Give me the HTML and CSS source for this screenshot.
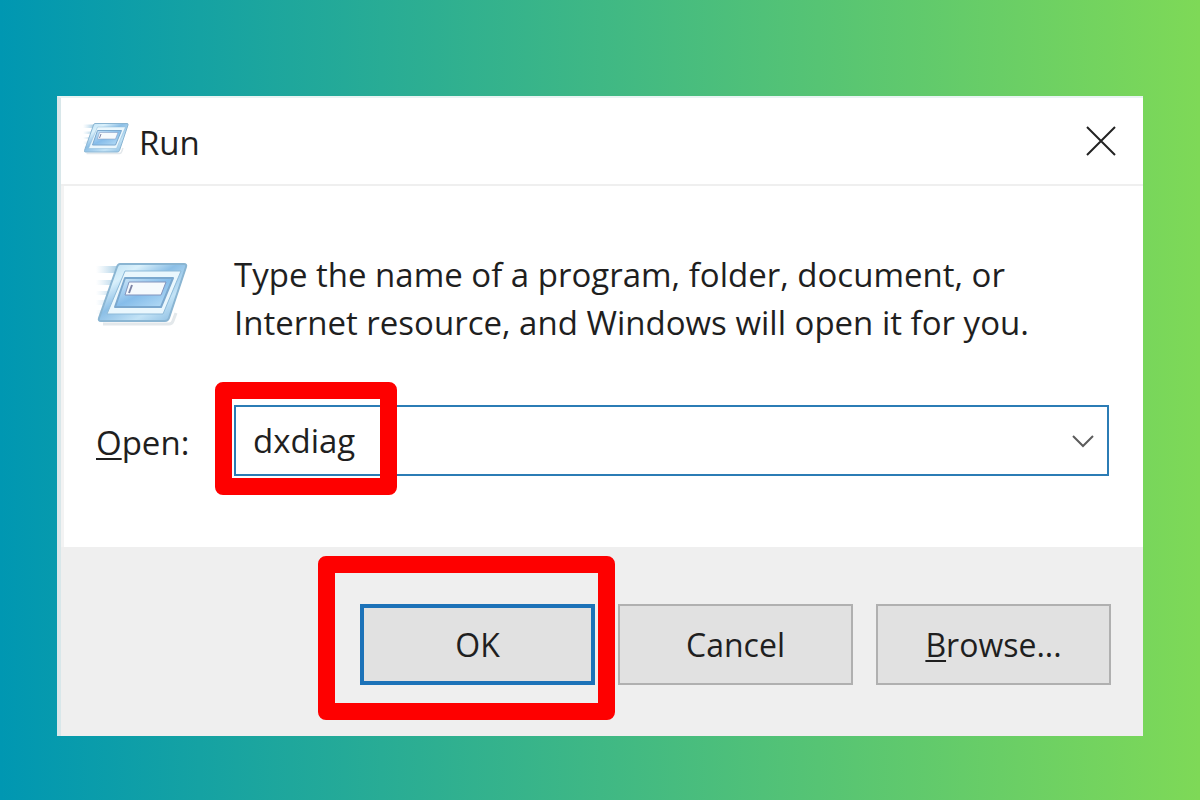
FILE: index.html
```html
<!DOCTYPE html>
<html lang="en">

<head>
    <meta charset="UTF-8">
    <title>Run</title>
    <link rel="stylesheet" href="styles.css">
</head>

<body>
    <div class="dialog" role="dialog" aria-labelledby="title">
        <header class="titlebar">
            <svg class="icon-small" viewBox="0 0 96 96" aria-hidden="true">
                <use href="#run-icon" />
            </svg>
            <h1 id="title">Run</h1>
            <button type="button" class="close" aria-label="Close">
                <svg width="30" height="30" viewBox="0 0 30 30">
                    <path d="M1 1L29 29M29 1L1 29" fill="none" stroke="#222" stroke-width="2" />
                </svg>
            </button>
        </header>

        <form id="run-form" class="content">
            <svg class="icon-big" viewBox="0 0 96 96" aria-hidden="true">
                <defs>
                    <linearGradient id="frame" x1="0" y1="0" x2="1" y2="1">
                        <stop offset="0" stop-color="#b5dcf3" />
                        <stop offset="0.25" stop-color="#d9f0fb" />
                        <stop offset="0.45" stop-color="#8cbfe6" />
                        <stop offset="0.7" stop-color="#c3e3f6" />
                        <stop offset="1" stop-color="#7db4dd" />
                    </linearGradient>
                    <linearGradient id="screen" x1="0" y1="0" x2="1" y2="1">
                        <stop offset="0" stop-color="#d3eaf9" />
                        <stop offset="0.5" stop-color="#86bdea" />
                        <stop offset="1" stop-color="#bce0f7" />
                    </linearGradient>
                    <linearGradient id="trail">
                        <stop offset="0" stop-color="#b9d9ec" stop-opacity="0" />
                        <stop offset="1" stop-color="#9cc6e0" />
                    </linearGradient>
                </defs>
                <g id="run-icon">
                    <path d="M0 15H24L21 22H0zM0 29H19L17 34H0zM0 40H15L13 44H0zM0 49H12L10 54H0zM0 59H8L6 63H0z" fill="url(#trail)" />
                    <path d="M7 73H73Q76 73 77 70L80 62" fill="none" stroke="#e3e8eb" stroke-width="3" />
                    <path d="M24 13H88Q91 13 90 16L73 67Q72 70 69 70H5Q2 70 3 67L21 16Q22 13 24 13z" fill="url(#frame)" stroke="#8ab5d2" stroke-width="2" />
                    <path d="M29 20H85L67 63H11z" fill="#eaf7fd" stroke="#8fbbd9" stroke-width="1" />
                    <path d="M29 27H77L65 56H19z" fill="url(#screen)" stroke="#7ba8ce" stroke-width="2" stroke-linejoin="round" />
                    <path d="M33 31H70L65 44H29z" fill="#f6fafd" stroke="#8394bd" stroke-width="1" stroke-linejoin="round" />
                    <path d="M36 34L33 42" stroke="#7d83a5" stroke-width="2" />
                </g>
            </svg>
            <p>Type the name of a program, folder, document, or<br>Internet resource, and Windows will open it for you.</p>

            <label for="open"><u>O</u>pen:</label>
            <div class="combo">
                <input type="text" id="open" name="open" value="dxdiag" autocomplete="off">
                <button type="button" class="arrow" aria-label="Show history">
                    <svg width="22" height="14" viewBox="0 0 22 14">
                        <path d="M1 2L11 12L21 2" fill="none" stroke="#5c5c5c" stroke-width="2" />
                    </svg>
                </button>
                <span class="mark mark-input"></span>
            </div>
        </form>

        <footer class="actions">
            <div class="marked">
                <button type="submit" form="run-form" class="btn default">OK</button>
                <span class="mark mark-ok"></span>
            </div>
            <button type="button" class="btn">Cancel</button>
            <button type="button" class="btn"><u>B</u>rowse...</button>
        </footer>
    </div>
</body>

</html>
```
FILE: styles.css
```css
* {
    box-sizing: border-box;
}

body {
    margin: 0;
    padding: 96px 57px 64px;
    min-height: 100vh;
    background: linear-gradient(90deg, #0097b2, #7ed957);
    font-family: "Open Sans", "Segoe UI", sans-serif;
    font-size: 33px;
    line-height: 48px;
    color: #1f1f1f;
}

button,
input {
    font: inherit;
    color: inherit;
}

u {
    text-decoration-thickness: 2px;
    text-underline-offset: 3px;
    text-decoration-skip-ink: none;
}

.dialog {
    background: #fff;
    border-left: 4px solid #d8e7ea;
    border-top: 2px solid #e8f4f2;
}

.titlebar {
    display: flex;
    align-items: center;
    height: 88px;
    padding: 0 18px 0 22px;
    border-bottom: 2px solid #efefef;
}

.titlebar h1 {
    flex: 1;
    margin: 0 0 0 8px;
    padding-top: 4px;
    font-size: 33px;
    font-weight: 400;
}

.icon-small {
    width: 48px;
    height: 48px;
}

.close,
.arrow {
    display: flex;
    align-items: center;
    justify-content: center;
    width: 48px;
    height: 48px;
    padding: 0;
    border: none;
    background: none;
}

.content {
    display: grid;
    grid-template-columns: 138px 1fr;
    row-gap: 58px;
    align-items: center;
    padding: 65px 34px 71px 32px;
    border-left: 3px solid #f3f3f3;
}

.content p {
    margin: 0;
}

.content label {
    padding-top: 4px;
}

.icon-big {
    width: 96px;
    height: 96px;
}

.combo {
    position: relative;
    display: flex;
    align-items: center;
    height: 71px;
    border: 2px solid #2b7cb5;
}

.combo input {
    flex: 1;
    min-width: 0;
    height: 100%;
    padding: 0 0 0 17px;
    border: none;
    outline: none;
    background: none;
}

.mark {
    position: absolute;
    border: 17px solid #fe0000;
    border-radius: 8px;
    pointer-events: none;
}

.mark-input {
    top: -25px;
    left: -21px;
    width: 182px;
    height: 113px;
}

.actions {
    display: flex;
    justify-content: flex-end;
    gap: 23px;
    padding: 57px 32px 51px;
    background: #efefef;
}

.marked {
    position: relative;
}

.mark-ok {
    top: -48px;
    left: -42px;
    width: 297px;
    height: 164px;
}

.btn {
    width: 235px;
    height: 81px;
    padding: 0;
    border: 2px solid #b0b0b0;
    background: #e1e1e1;
    font-size: 32px;
}

.btn.default {
    border: 4px solid #1c72b8;
}
```
